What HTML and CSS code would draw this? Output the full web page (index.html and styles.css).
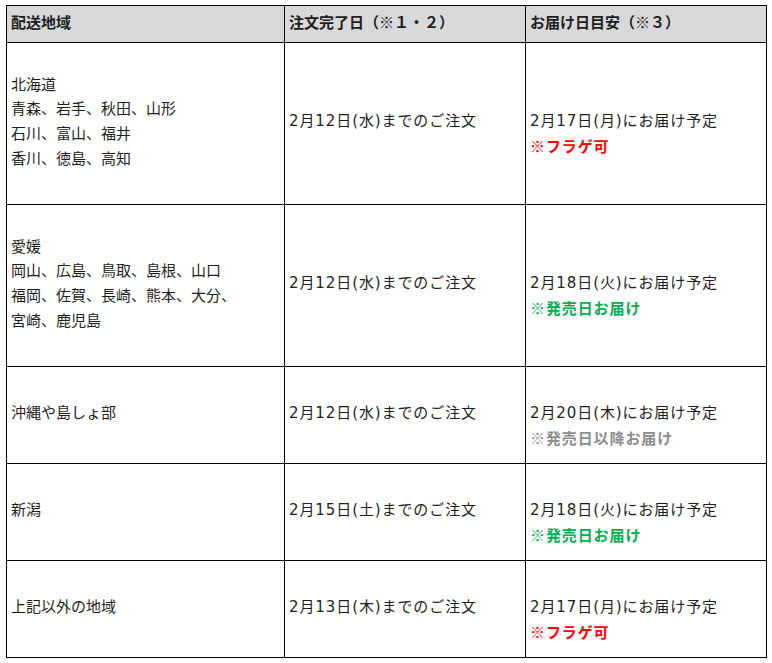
FILE: index.html
```html
<!DOCTYPE html>
<html lang="ja">
<head>
<meta charset="utf-8">
<link rel="stylesheet" href="styles.css">
</head>
<body>
<table class="ship">
  <colgroup>
    <col class="c1">
    <col class="c2">
    <col class="c3">
  </colgroup>
  <thead>
    <tr class="head">
      <th>配送地域</th>
      <th>注文完了日（※１・２）</th>
      <th>お届け日目安（※３）</th>
    </tr>
  </thead>
  <tbody>
    <tr class="tall">
      <td>北海道<br>青森、岩手、秋田、山形<br>石川、富山、福井<br>香川、徳島、高知</td>
      <td><span class="date">2月12日(水)までのご注文</span></td>
      <td class="deliv"><span class="date">2月17日(月)にお届け予定</span><br><span class="note red">※フラゲ可</span></td>
    </tr>
    <tr class="tall">
      <td>愛媛<br>岡山、広島、鳥取、島根、山口<br>福岡、佐賀、長崎、熊本、大分、<br>宮崎、鹿児島</td>
      <td><span class="date">2月12日(水)までのご注文</span></td>
      <td class="deliv"><span class="date">2月18日(火)にお届け予定</span><br><span class="note green">※発売日お届け</span></td>
    </tr>
    <tr class="short">
      <td>沖縄や島しょ部</td>
      <td><span class="date">2月12日(水)までのご注文</span></td>
      <td class="deliv"><span class="date">2月20日(木)にお届け予定</span><br><span class="note gray">※発売日以降お届け</span></td>
    </tr>
    <tr class="short">
      <td>新潟</td>
      <td><span class="date">2月15日(土)までのご注文</span></td>
      <td class="deliv"><span class="date">2月18日(火)にお届け予定</span><br><span class="note green">※発売日お届け</span></td>
    </tr>
    <tr class="short">
      <td>上記以外の地域</td>
      <td><span class="date">2月13日(木)までのご注文</span></td>
      <td class="deliv"><span class="date">2月17日(月)にお届け予定</span><br><span class="note red">※フラゲ可</span></td>
    </tr>
  </tbody>
</table>
</body>
</html>
```

FILE: styles.css
```css
html, body {
  margin: 0;
  padding: 0;
  background: #ffffff;
}
body {
  font-family: "Noto Sans CJK JP", "Noto Sans", sans-serif;
  font-size: 15px;
  color: #1e1e1e;
}
.ship {
  border-collapse: collapse;
  table-layout: fixed;
  width: 761px;
  margin: 5px 0 0 6px;
}
.c1 { width: 278px; }
.c2 { width: 241px; }
.c3 { width: 241px; }
.ship th,
.ship td {
  border: 1px solid #000000;
  padding: 0 4px 5px 4px;
  line-height: 24.7px;
  text-align: left;
  vertical-align: middle;
  white-space: nowrap;
}
.ship th {
  background: #d9d9d9;
  font-weight: bold;
  padding-bottom: 3px;
}
.head { height: 37px; }
.tall { height: 162px; }
.short { height: 97px; }
.ship td.deliv {
  padding-top: 25px;
}
.date {
  font-family: "DejaVu Sans", "Noto Sans CJK JP", sans-serif;
  letter-spacing: 0.9px;
}
.note {
  font-weight: bold;
  letter-spacing: 0.9px;
}
.red { color: #ff0000; }
.green { color: #00b050; }
.gray { color: #8c8c8c; }
```
